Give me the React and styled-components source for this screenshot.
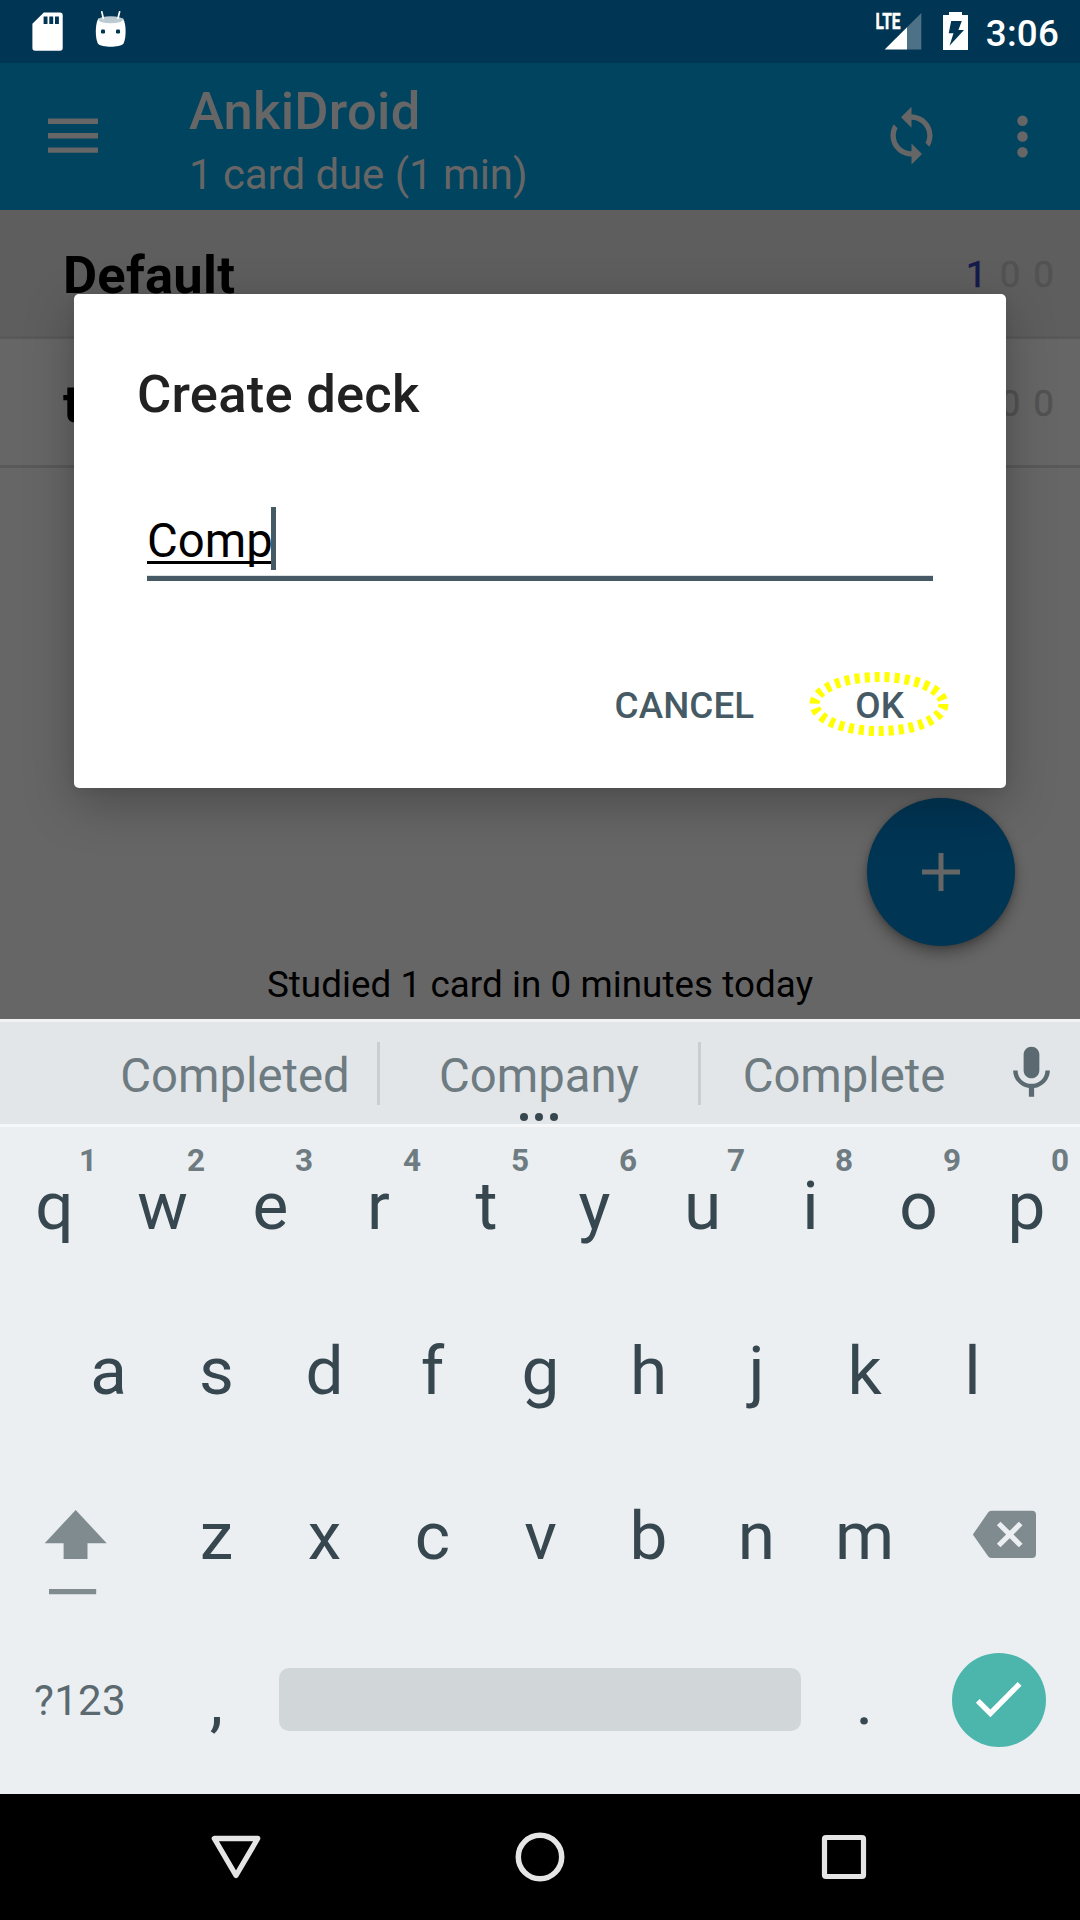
import React from "react";
import styled, { createGlobalStyle } from "styled-components";

const Global = createGlobalStyle`
  * { box-sizing: border-box; }
  body { margin: 0; background: #000; font-family: Roboto, "Noto Sans", sans-serif; }
  svg { display: block; flex: none; }
`;

const Screen = styled.div`
  position: relative;
  width: 1080px;
  height: 1920px;
  display: flex;
  flex-direction: column;
  overflow: hidden;
`;

const StatusBar = styled.header`
  flex: none;
  height: 63px;
  background: #003553;
  display: flex;
  justify-content: space-between;
  padding: 0 21px 0 32px;
`;

const StatusGroup = styled.div`
  display: flex;
  align-items: flex-start;
  gap: ${(p) => p.$gap}px;
`;

const Clock = styled.span`
  color: #fff;
  font-size: 36.75px;
  font-weight: 500;
  line-height: 67px;
  letter-spacing: 0.2px;
  margin-left: -3px;
`;

const Toolbar = styled.div`
  flex: none;
  height: 147px;
  background: #004460;
  display: flex;
  align-items: flex-start;
`;

const MenuIcon = styled.svg`
  margin: 55px 0 0 48px;
`;

const Titles = styled.div`
  flex: 1;
  padding: 17px 0 0 91px;
  color: #666;
`;

const AppTitle = styled.h1`
  margin: 0 0 8px;
  font-size: 52.5px;
  font-weight: 500;
  line-height: 62px;
  letter-spacing: 0.25px;
`;

const Subtitle = styled.div`
  font-size: 42px;
  line-height: 50px;
  letter-spacing: -0.06px;
`;

const ToolbarActions = styled.div`
  display: flex;
  gap: 48px;
  padding: 41px 26px 0 0;
`;

const Main = styled.main`
  flex: none;
  height: 809px;
  background: #666;
  display: flex;
  flex-direction: column;
`;

const DeckRow = styled.div`
  height: 129px;
  display: flex;
  justify-content: space-between;
  align-items: center;
  padding: 4px 26px 0 63px;
  background: ${(p) => (p.$selected ? "#5e5e5e" : "#666")};
  border-bottom: 3px solid #595959;
`;

const DeckName = styled.span`
  font-size: 52.5px;
  font-weight: 700;
  line-height: 62px;
  letter-spacing: 0.25px;
  color: #000;
`;

const Counts = styled.div`
  display: flex;
  gap: 13px;
  font-size: 36.75px;
  line-height: 42px;
`;

const Count = styled.span`
  color: ${(p) => (p.$active ? "#141a4c" : "#525252")};
  -webkit-text-stroke: ${(p) => (p.$active ? "0.6px #141a4c" : "0.4px #525252")};
`;

const Studied = styled.div`
  margin-top: auto;
  padding-bottom: 13px;
  text-align: center;
  font-size: 36.75px;
  line-height: 43px;
  letter-spacing: 0.07px;
  color: #000;
`;

const Fab = styled.button`
  position: absolute;
  left: 867px;
  top: 798px;
  width: 148px;
  height: 148px;
  border: 0;
  border-radius: 50%;
  padding: 0 1px 1px 0;
  background: #003554;
  display: flex;
  align-items: center;
  justify-content: center;
  box-shadow: 0 8px 14px rgba(0, 0, 0, 0.3), 0 1px 5px rgba(0, 0, 0, 0.2);
`;

const Dialog = styled.section`
  position: absolute;
  left: 74px;
  top: 294px;
  width: 932px;
  height: 494px;
  border-radius: 5px;
  background: #fff;
  padding-top: 69px;
  box-shadow: 0 16px 50px rgba(0, 0, 0, 0.26), 0 2px 10px rgba(0, 0, 0, 0.06);
`;

const DialogTitle = styled.h2`
  margin: 0 63px;
  font-size: 52.5px;
  font-weight: 500;
  line-height: 62px;
  letter-spacing: 0.25px;
  color: #212121;
`;

const Field = styled.div`
  margin: 82px 73px 0;
  height: 74px;
  display: flex;
  border-bottom: 5px solid #455a64;
  box-shadow: inset 0 -1px 0 #dde2e5;
`;

const Composing = styled.span`
  font-size: 47.25px;
  line-height: 68px;
  color: #000;
  text-decoration: underline;
  text-decoration-thickness: 3px;
  text-underline-offset: 4px;
  text-decoration-skip-ink: none;
`;

const Caret = styled.span`
  width: 5px;
  height: 63px;
  margin-left: -2px;
  background: #455a64;
`;

const Actions = styled.div`
  margin-top: 77px;
  padding-right: 102px;
  display: flex;
  justify-content: flex-end;
  gap: 101px;
`;

const TextButton = styled.button`
  position: relative;
  border: 0;
  padding: 0;
  background: none;
  font-family: inherit;
  font-size: 36.75px;
  font-weight: 500;
  line-height: 95px;
  letter-spacing: 0.1px;
  color: #455a64;
`;

const Highlight = styled.svg`
  position: absolute;
  left: 50%;
  top: 50%;
  margin: -36.5px 0 0 -73px;
`;

const Keyboard = styled.section`
  flex: none;
  height: 775px;
  background: #ebeff2;
`;

const Suggestions = styled.div`
  height: 108px;
  background: #e2e6e9;
  border-top: 3px solid #f0f2f3;
  border-bottom: 3px solid #f5f7f8;
  display: flex;
  align-items: flex-start;
  padding-left: 93px;
`;

const Suggestion = styled.div`
  position: relative;
  flex: none;
  width: ${(p) => p.$width}px;
  text-align: center;
  font-size: 47.25px;
  line-height: 109px;
  color: #6e7b81;
`;

const Divider = styled.span`
  flex: none;
  width: 3px;
  height: 63px;
  margin-top: 20px;
  background: #c9ced1;
`;

const MoreDots = styled.span`
  position: absolute;
  left: 0;
  right: 0;
  top: 91px;
  display: flex;
  justify-content: center;
  gap: 7px;
`;

const Dot = styled.i`
  width: 8px;
  height: 8px;
  border-radius: 50%;
  background: #37474f;
`;

const MicButton = styled.div`
  padding: 19px 0 0 13px;
`;

const KeyRow = styled.div`
  display: flex;
  justify-content: center;
  align-items: stretch;
  height: ${(p) => p.$height || 165}px;
`;

const Key = styled.div`
  position: relative;
  width: ${(p) => p.$width || 108}px;
  display: flex;
  align-items: center;
  justify-content: center;
  font-size: 67.5px;
  color: #37474f;
  line-height: 78px;
  padding-bottom: ${(p) => p.$lift || 0}px;
  padding-left: 1px;
`;

const Hint = styled.span`
  position: absolute;
  right: 11px;
  top: 15px;
  font-size: 31.5px;
  font-weight: 700;
  line-height: 37px;
  color: #6e7b81;
`;

const SymbolKey = styled(Key)`
  width: 162px;
  padding: 0 2px 0 0;
  font-size: 42px;
  letter-spacing: 0.3px;
  color: #5b6970;
`;

const SpaceBar = styled.div`
  width: 522px;
  height: 63px;
  margin: 50px 9px 0;
  border-radius: 10px;
  background: #d1d6d9;
`;

const EnterCell = styled.div`
  width: 162px;
  padding: 35px 0 0 34px;
`;

const Enter = styled.div`
  width: 94px;
  height: 94px;
  border-radius: 50%;
  background: #4db6ac;
  display: flex;
  align-items: center;
  justify-content: center;
`;

const EdgeCell = styled.div`
  width: 162px;
  padding: ${(p) => p.$pad};
`;

const NavBar = styled.nav`
  flex: none;
  height: 126px;
  background: #000;
  display: flex;
  justify-content: center;
  align-items: center;
  gap: 240px;
`;

const SdCard = () => (
  <svg width="31" height="63" viewBox="32 0 31 63">
    <path fillRule="evenodd" fill="#fff" d="M43.8 12.5H60a2.7 2.7 0 0 1 2.7 2.7V48a2.7 2.7 0 0 1-2.7 2.7H35.1a2.7 2.7 0 0 1-2.7-2.7V23.8ZM43.6 16.5v7.6h3.9v-7.6Zm5.7 0v7.6h3.9v-7.6Zm5.7 0v7.6h3.9v-7.6Z" />
  </svg>
);

const Bugdroid = () => (
  <svg width="32" height="63" viewBox="95 0 32 63">
    <path fill="#fff" d="M98.3 18.5h24.8c2 4 2.5 8.500 2.500 13s-.6 8.500-2 12c-1.400 2.400-8 3.200-12.900 3.200s-11.500-.8-12.900-3.200c-1.400-3.500-2-7.500-2-12s.5-9 2.500-13Z" />
    <ellipse cx="110.700" cy="19.800" rx="12.200" ry="3.500" fill="#bccbd2" />
    <path stroke="#fff" strokeWidth="1.700" strokeLinecap="round" d="m101.800 11.800 1.500 6.500M119.600 11.800l-1.600 6.500" />
    <rect x="101" y="29.500" width="4" height="4" rx="1.200" fill="#003553" />
    <rect x="116" y="29.500" width="4" height="4" rx="1.200" fill="#003553" />
  </svg>
);

const Signal = () => (
  <svg width="46" height="63" viewBox="876 0 46 63">
    <path fill="#4d7287" d="M921.300 13v36.500H907V27.300Z" />
    <path fill="#fff" d="M907 27.300v22.200h-22.300Z" />
    <text x="875.500" y="29.300" fill="#fff" stroke="#fff" strokeWidth=".5" fontSize="21.800" fontWeight="700" textLength="25" lengthAdjust="spacingAndGlyphs">LTE</text>
  </svg>
);

const Battery = () => (
  <svg width="25" height="63" viewBox="943 0 25 63">
    <path fill="#fff" d="M949 12h13v3h6v35h-25V15h6Z" />
    <path fill="#003553" d="M951.200 21h10.600l-3.400 9h5.600l-14.500 15.700 4-12.400h-4.800Z" />
  </svg>
);

const DECKS = [
  { name: "Default", counts: [1, 0, 0], selected: true },
  { name: "t", counts: [0, 0, 0], selected: false },
];

export default function App() {
  return (
    <>
      <Global />
      <Screen>
        <StatusBar>
          <StatusGroup $gap={32}>
            <SdCard />
            <Bugdroid />
          </StatusGroup>
          <StatusGroup $gap={21}>
            <Signal />
            <Battery />
            <Clock>3:06</Clock>
          </StatusGroup>
        </StatusBar>

        <Toolbar>
          <MenuIcon width="50" height="36" viewBox="0 0 50 36" fill="#666">
            <path d="M0 .6h50v5.400H0ZM0 15h50v5.400H0ZM0 29.400h50v5.400H0Z" />
          </MenuIcon>
          <Titles>
            <AppTitle>AnkiDroid</AppTitle>
            <Subtitle>1 card due (1 min)</Subtitle>
          </Titles>
          <ToolbarActions>
            <svg width="63" height="63" viewBox="0 0 24 24" fill="#666">
              <path d="M12 4V1L8 5l4 4V6c3.310 0 6 2.690 6 6 0 1.010-.25 1.970-.7 2.800l1.460 1.460C19.540 15.030 20 13.570 20 12c0-4.420-3.580-8-8-8zm0 14c-3.310 0-6-2.690-6-6 0-1.010.25-1.970.7-2.800L5.240 7.740C4.460 8.970 4 10.430 4 12c0 4.420 3.580 8 8 8v3l4-4-4-4v3z" />
            </svg>
            <svg width="63" height="63" viewBox="0 0 24 24" fill="#666">
              <circle cx="12" cy="6.400" r="2" />
              <circle cx="12" cy="12.400" r="2" />
              <circle cx="12" cy="18.400" r="2" />
            </svg>
          </ToolbarActions>
        </Toolbar>

        <Main>
          {DECKS.map((d) => (
            <DeckRow key={d.name} $selected={d.selected}>
              <DeckName>{d.name}</DeckName>
              <Counts>
                {d.counts.map((c, i) => (
                  <Count key={i} $active={c > 0}>{c}</Count>
                ))}
              </Counts>
            </DeckRow>
          ))}
          <Studied>Studied 1 card in 0 minutes today</Studied>
        </Main>

        <Keyboard>
          <Suggestions>
            <Suggestion $width={284}>Completed</Suggestion>
            <Divider />
            <Suggestion $width={318}>
              Company
              <MoreDots><Dot /><Dot /><Dot /></MoreDots>
            </Suggestion>
            <Divider />
            <Suggestion $width={286}>Complete</Suggestion>
            <MicButton>
              <svg width="63" height="64" viewBox="0 0 24 24" fill="#5b6970">
                <path d="M12 14c1.660 0 2.990-1.340 2.990-3L15 5c0-1.660-1.340-3-3-3S9 3.340 9 5v6c0 1.660 1.340 3 3 3zm5.300-3c0 3-2.540 5.100-5.300 5.100S6.700 14 6.700 11H5c0 3.410 2.720 6.230 6 6.720V21h2v-3.280c3.280-.48 6-3.300 6-6.720h-1.700z" />
              </svg>
            </MicButton>
          </Suggestions>

          <KeyRow $height={161}>
            {[..."qwertyuiop"].map((k, i) => (
              <Key key={k} $lift={3}>
                {k}
                <Hint>{(i + 1) % 10}</Hint>
              </Key>
            ))}
          </KeyRow>
          <KeyRow>
            {[..."asdfghjkl"].map((k) => <Key key={k}>{k}</Key>)}
          </KeyRow>
          <KeyRow>
            <EdgeCell $pad="56px 0 0 44px">
              <svg width="64" height="86" viewBox="44 1509 64 86" fill="#808b90">
                <path d="m75.700 1510 31 33.200H87.500v15.800H63.600v-15.800H44.700ZM49 1589h47.200v5.300H49Z" />
              </svg>
            </EdgeCell>
            {[..."zxcvbnm"].map((k) => <Key key={k}>{k}</Key>)}
            <EdgeCell $pad="57px 0 0 55px">
              <svg width="64" height="49" viewBox="973 1510 64 49">
                <path fill="#808b90" d="M991.500 1510.800H1032a4 4 0 0 1 4 4v39.200a4 4 0 0 1-4 4h-40.500c-1.700 0-2.700-.7-3.600-2l-15-21.500 15-21.700c.9-1.300 1.900-2 3.600-2Z" />
                <path stroke="#ebeff2" strokeWidth="5.200" d="m998.700 1523.500 22 22M1020.700 1523.500l-22 22" />
              </svg>
            </EdgeCell>
          </KeyRow>
          <KeyRow>
            <SymbolKey>?123</SymbolKey>
            <Key>,</Key>
            <SpaceBar />
            <Key>.</Key>
            <EnterCell>
              <Enter>
                <svg width="94" height="94" viewBox="952 1653 94 94" fill="none">
                  <path stroke="#fff" strokeWidth="5.400" d="m977.800 1700.800 12.600 12.700 29.200-29.700" />
                </svg>
              </Enter>
            </EnterCell>
          </KeyRow>
        </Keyboard>

        <NavBar>
          <svg width="64" height="64" viewBox="0 0 64 64" fill="none" stroke="#e5e5e5" strokeWidth="5.300" strokeLinejoin="round">
            <path d="M10.300 13.500h43.400L32 50.500Z" />
          </svg>
          <svg width="64" height="64" viewBox="0 0 64 64" fill="none" stroke="#e5e5e5" strokeWidth="5.500">
            <circle cx="32" cy="32" r="21.700" />
          </svg>
          <svg width="64" height="64" viewBox="0 0 64 64" fill="none" stroke="#e5e5e5" strokeWidth="5.200">
            <rect x="12.500" y="12.500" width="39" height="39" rx="1.500" />
          </svg>
        </NavBar>

        <Fab>
          <svg width="38" height="38" viewBox="0 0 38 38" fill="#666">
            <path d="M16.500 0h5v16.500H38v5H21.500V38h-5V21.500H0v-5h16.500Z" />
          </svg>
        </Fab>

        <Dialog>
          <DialogTitle>Create deck</DialogTitle>
          <Field>
            <Composing>Comp</Composing>
            <Caret />
          </Field>
          <Actions>
            <TextButton>CANCEL</TextButton>
            <TextButton>
              OK
              <Highlight width="144" height="70" viewBox="-72 -35 144 70" fill="none">
                <ellipse rx="64.500" ry="27" stroke="#ff0" strokeWidth="10" strokeDasharray="5 5" />
              </Highlight>
            </TextButton>
          </Actions>
        </Dialog>
      </Screen>
    </>
  );
}
